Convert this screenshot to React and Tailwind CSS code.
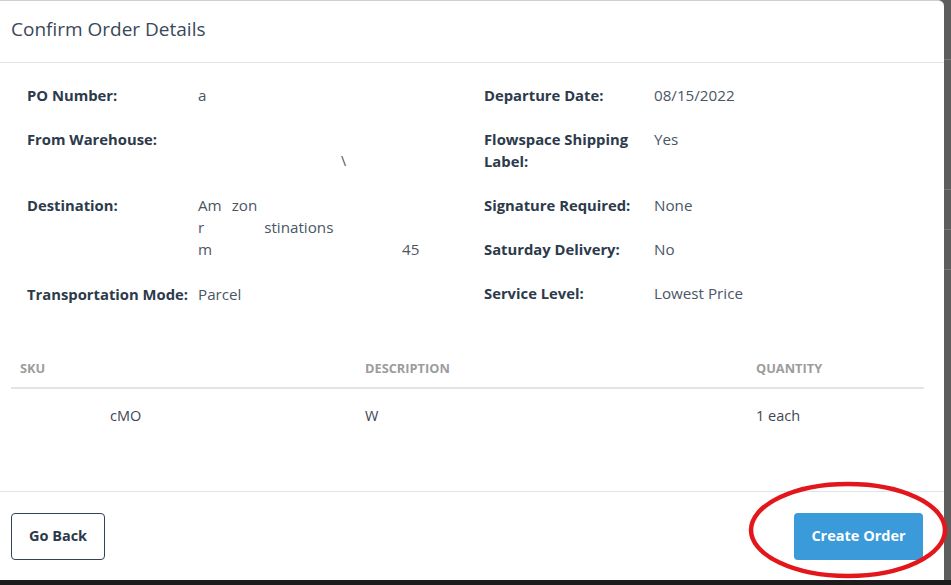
import React from "react";

const font = { fontFamily: "'Open Sans', Lato, sans-serif" };

const Row = ({ label, children, labelWidth }) => (
  <div className="flex">
    <div className={`${labelWidth} shrink-0 pr-2 font-bold text-[14.8px] leading-[22px] text-[#2c3a4b]`}>{label}</div>
    <div className="text-[15.2px] leading-[22px] text-[#4b5565]">{children}</div>
  </div>
);

export default function App() {
  return (
    <div className="relative w-[951px] h-[585px] overflow-hidden bg-[#5d5d5d] flex flex-col" style={font}>
      <div className="flex flex-1">
        <div className="w-[944px] h-[580px] bg-white rounded-tr-md border-t border-[#cfcfcf] flex flex-col">
          {/* header */}
          <div className="h-[62px] px-[11px] pb-[4px] flex items-center border-b border-[#e3e4e6]">
            <h2 className="text-[19px] text-[#3b4757] font-normal">Confirm Order Details</h2>
          </div>

          {/* details */}
          <div className="flex-1 flex flex-col">
            <div className="grid grid-cols-[457px_1fr] px-[27px] pt-[21px]">
              <div className="flex flex-col gap-[22px]">
                <Row label="PO Number:" labelWidth="w-[171px]">a</Row>
                <div className="flex flex-col">
                  <Row label="From Warehouse:" labelWidth="w-[171px]" />
                  <div className="h-[22px] text-[14px] leading-[22px] text-[#4b5565] pl-[314px]">\</div>
                </div>
                <Row label="Destination:" labelWidth="w-[171px]">
                  <div>Am<span className="ml-[10px]">zon</span></div>
                  <div>r<span className="ml-[60px]">stinations</span></div>
                  <div>m<span className="ml-[190px]">45</span></div>
                </Row>
                <div className="pt-[1px]">
                  <Row label="Transportation Mode:" labelWidth="w-[171px]">Parcel</Row>
                </div>
              </div>
              <div className="flex flex-col gap-[22px]">
                <Row label="Departure Date:" labelWidth="w-[170px]">08/15/2022</Row>
                <Row label={<>Flowspace Shipping<br />Label:</>} labelWidth="w-[170px]">Yes</Row>
                <Row label="Signature Required:" labelWidth="w-[170px]">None</Row>
                <Row label="Saturday Delivery:" labelWidth="w-[170px]">No</Row>
                <Row label="Service Level:" labelWidth="w-[170px]">Lowest Price</Row>
              </div>
            </div>

            {/* items table */}
            <div className="ml-[11px] mr-[20px] mt-auto mb-[46px]">
              <div className="grid grid-cols-[345px_391px_1fr] h-[38px] pt-[1px] pb-[2px] items-center border-b-2 border-[#e2e4ea] text-[12.8px] font-bold uppercase text-[#9c9c9c]">
                <div className="pl-[9px]">SKU</div>
                <div className="pl-[9px]">Description</div>
                <div className="pl-[9px]">Quantity</div>
              </div>
              <div className="grid grid-cols-[345px_391px_1fr] h-[56px] pb-[2px] items-center text-[14.5px] text-[#3d4654]">
                <div className="pl-[99px]">cMO</div>
                <div className="pl-[9px]">W</div>
                <div className="pl-[9px]">1 each</div>
              </div>
            </div>
          </div>

          {/* footer */}
          <div className="h-[89px] shrink-0 border-t border-[#e3e4e6] pl-[11px] pr-[21px] flex items-center justify-between">
            <button className="w-[94px] h-[47px] rounded-[4px] border-[1.5px] border-[#33415a] bg-white text-[14.5px] font-bold text-[#2c3a4b]">
              Go Back
            </button>
            <button className="w-[129px] h-[47px] rounded-[4px] bg-[#3a9ada] text-[14.5px] font-bold text-white">
              Create Order
            </button>
          </div>
        </div>
        <div className="flex-1 flex flex-col">
          <div className="h-[60px] border-b border-[#777]" />
          <div className="h-[130px] border-b border-[#777]" />
          <div className="h-[40px] border-b border-[#777]" />
          <div className="h-[40px] border-b border-[#777]" />
        </div>
      </div>
      <div className="h-[5px] bg-[#1c1c1c]" />

      {/* red annotation ellipse */}
      <svg className="absolute left-[748px] top-[480px]" width="203" height="100" viewBox="0 0 203 100">
        <ellipse cx="100" cy="50" rx="97" ry="46" fill="none" stroke="#e3161b" strokeWidth="4.5" />
      </svg>
    </div>
  );
}
